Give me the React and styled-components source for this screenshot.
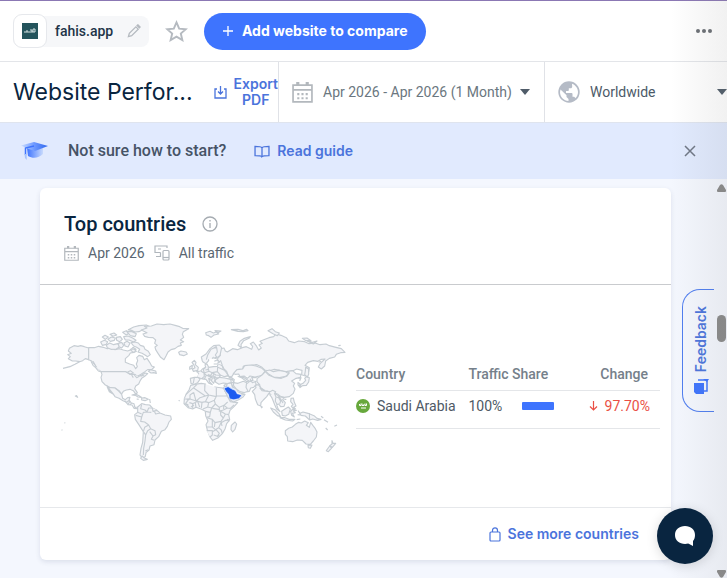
import styled, { createGlobalStyle } from "styled-components";

const GlobalStyle = createGlobalStyle`
  * {
    box-sizing: border-box;
  }
  body {
    margin: 0;
    background: #f4f7fe;
    color: #3a5166;
    font-family: Roboto, sans-serif;
    font-size: 14px;
    line-height: 16px;
  }
  button {
    border: 0;
    padding: 0;
    background: none;
    color: inherit;
    font: inherit;
    cursor: pointer;
  }
  svg {
    display: block;
    flex-shrink: 0;
  }
`;

const Page = styled.div`
  position: relative;
  min-height: 100vh;
  display: flex;
  flex-direction: column;
  overflow: hidden;
`;
const EdgeShade = styled.div`
  position: absolute;
  top: 0;
  right: 0;
  bottom: 0;
  width: 56px;
  background: linear-gradient(to right, rgba(120, 120, 120, 0), rgba(120, 120, 120, 0.1));
  pointer-events: none;
`;

const TopBar = styled.header`
  display: flex;
  align-items: center;
  height: 62px;
  padding: 0 14px 0 13px;
  background: #fff;
  border-top: 1px solid #8b78b4;
  border-bottom: 1px solid #e3e5e9;
`;
const SiteChip = styled.div`
  display: flex;
  align-items: center;
  height: 31px;
  padding-right: 8px;
  border-radius: 8px;
  background: #f6f7f9;
`;
const SiteLogo = styled.div`
  display: grid;
  place-items: center;
  width: 34px;
  height: 34px;
  border: 1px solid #e6e8ec;
  border-radius: 9px;
  background: #fff;
`;
const LogoTile = styled.div`
  display: grid;
  place-items: center;
  width: 16px;
  height: 16px;
  background: #24545c;
`;
const SiteName = styled.span`
  margin: 0 14px 0 8px;
  color: #1e3448;
  font-weight: 500;
`;
const IconButton = styled.button`
  display: grid;
  place-items: center;
  color: ${(props) => props.$color || "#b5bac0"};
`;
const StarButton = styled(IconButton)`
  margin: 0 16px;
`;
const CompareButton = styled.button`
  display: flex;
  align-items: center;
  justify-content: center;
  gap: 9px;
  width: 222px;
  height: 37px;
  border-radius: 19px;
  background: #3e74fe;
  color: #fff;
  font-family: Inter, sans-serif;
  font-size: 14px;
  font-weight: 700;
`;
const MoreButton = styled(IconButton)`
  margin-left: auto;
`;

const FilterBar = styled.div`
  display: flex;
  height: 61px;
  background: #fff;
  border-bottom: 1px solid #dfe4ee;
`;
const TitleArea = styled.div`
  display: flex;
  align-items: center;
  justify-content: space-between;
  width: 278px;
  padding-left: 13px;
`;
const Title = styled.h1`
  margin: 0;
  color: #092540;
  font-family: Inter, sans-serif;
  font-size: 23px;
  font-weight: 400;
  line-height: 32px;
  white-space: nowrap;
`;
const ExportButton = styled.button`
  display: flex;
  align-items: center;
  gap: 7px;
  color: #4b74dc;
  font-family: Inter, sans-serif;
  font-size: 14px;
  font-weight: 600;
  text-align: center;
`;
const Filter = styled.button`
  display: flex;
  align-items: center;
  flex: ${(props) => (props.$grow ? "1" : "0 0 266px")};
  padding-left: 13px;
  border-left: 1px solid #e0e2e7;
  color: ${(props) => (props.$grow ? "#4c5a68" : "#6b7780")};
  white-space: nowrap;
  overflow: hidden;
`;
const FilterLabel = styled.span`
  margin: 0 8px 0 10px;
  ${(props) => props.$fill && "flex: 1; text-align: left;"}
`;

const Banner = styled.section`
  display: flex;
  align-items: center;
  height: 56px;
  padding: 0 31px 0 21px;
  background: #e1eafe;
`;
const BannerText = styled.span`
  margin: 0 28px 0 20px;
  color: #465366;
  font-size: 16px;
  font-weight: 500;
`;
const TextLink = styled.a`
  display: flex;
  align-items: center;
  gap: 7px;
  color: #4b74dc;
  font-family: Inter, sans-serif;
  font-size: 14px;
  font-weight: 600;
  text-decoration: none;
`;
const CloseButton = styled(IconButton)`
  margin-left: auto;
`;

const Content = styled.div`
  display: flex;
  flex: 1;
`;
const Main = styled.main`
  flex: 1;
  min-width: 0;
  padding: 9px 44px 18px 40px;
`;
const ScrollTrack = styled.div`
  display: flex;
  flex-direction: column;
  align-items: center;
  width: 12px;
  padding: 5px 0 0;
`;
const ScrollThumb = styled.div`
  width: 9px;
  height: 27px;
  margin: 123px 0 auto;
  border-radius: 5px;
  background: #8a8a8a;
`;

const Card = styled.section`
  border-radius: 6px;
  background: #fff;
  box-shadow: 0 2px 5px rgba(40, 60, 100, 0.12);
`;
const CardHeader = styled.header`
  padding: 24px 24px 23px;
  border-bottom: 1px solid #c9cbce;
`;
const CardTitle = styled.h2`
  display: flex;
  align-items: center;
  gap: 16px;
  margin: 0 0 9px;
  color: #092540;
  font-size: 20px;
  font-weight: 500;
  line-height: 24px;
`;
const CardMeta = styled.div`
  display: flex;
  align-items: center;
  gap: 9px;
  color: #5a6772;
`;
const CardBody = styled.div`
  display: flex;
  align-items: flex-start;
  padding: 30px 11px 37px 15px;
`;
const TableBox = styled.div`
  flex: 1;
  padding: 44px 0 1px 1px;
`;
const Table = styled.table`
  width: 100%;
  table-layout: fixed;
  border-collapse: collapse;
  tr {
    border-bottom: 1px solid #e4e6e9;
  }
`;
const Th = styled.th`
  width: ${(props) => props.$width};
  height: 31px;
  padding: 0 12px 0 0;
  color: #75808a;
  font-weight: 500;
  text-align: ${(props) => props.$align || "left"};
`;
const Td = styled.td`
  height: 38px;
  padding: 0 10px 6px 0;
  color: ${(props) => props.$color || "#4e5965"};
  white-space: nowrap;
`;
const Cell = styled.div`
  display: flex;
  align-items: center;
  justify-content: ${(props) => props.$justify || "flex-start"};
  gap: ${(props) => props.$gap || "7px"};
`;
const ShareBar = styled.span`
  width: 32px;
  height: 8px;
  border-radius: 1px;
  background: #3e74fe;
`;
const CardFooter = styled.footer`
  display: flex;
  align-items: center;
  justify-content: flex-end;
  height: 53px;
  padding-right: 32px;
  border-top: 1px solid #e6e8eb;
`;

const FeedbackTab = styled.button`
  position: absolute;
  top: 289px;
  right: 13px;
  display: flex;
  flex-direction: column-reverse;
  align-items: center;
  justify-content: center;
  gap: 5px;
  width: 32px;
  height: 123px;
  padding-left: 5px;
  border: 1px solid #4f7ef0;
  border-right: 0;
  border-radius: 18px 0 0 18px;
  background: #f4f7fe;
  color: #4b74dc;
  font-family: Inter, sans-serif;
  font-size: 14px;
  font-weight: 600;
`;
const FeedbackText = styled.span`
  writing-mode: vertical-rl;
  transform: rotate(180deg);
`;
const ChatButton = styled.button`
  position: absolute;
  right: 14px;
  bottom: 14px;
  display: grid;
  place-items: center;
  width: 56px;
  height: 56px;
  border-radius: 50%;
  background: #092540;
  box-shadow: 0 2px 12px rgba(0, 0, 0, 0.15);
`;

const CalendarIcon = ({ size, color }) => (
  <svg width={size} height={size} viewBox="0 0 20 20" fill="none" stroke={color} strokeWidth="1.6">
    <path d="M1 3H19V19H1ZM1 7.500H19" />
    <path d="M5.500 0V3M14.500 0V3" strokeWidth="3" />
    <path d="M5 11.500H15M5 15.500H15" strokeWidth="2" strokeDasharray="2 2" />
  </svg>
);

const PencilIcon = () => (
  <svg width="14" height="14" viewBox="0 0 15 15" fill="none" stroke="currentColor" strokeWidth="1.4">
    <path d="M1.5 13.5L2.5 10L9.500 3L12 5.500L5 12.5ZM10.8 1.7L11.7 .9L14 3.3L13.2 4.1Z" />
  </svg>
);

const StarIcon = () => (
  <svg width="23" height="22" viewBox="0 0 24 23" fill="none" stroke="currentColor" strokeWidth="2">
    <path d="M12 2.5L14.8 9L21.8 9.6L16.5 14.2L18.1 21L12 17.4L5.9 21L7.5 14.2L2.2 9.6L9.2 9Z" />
  </svg>
);

const CaretIcon = () => (
  <svg width="10" height="6" viewBox="0 0 10 6" fill="#4f5c69">
    <path d="M0 0H10L5 6Z" />
  </svg>
);

const DownloadIcon = () => (
  <svg width="13" height="14" viewBox="0 0 13 14" fill="none" stroke="currentColor" strokeWidth="1.3">
    <path d="M3 4H1V13H12V4H10M6.500 1V9M4 6.500L6.500 9L9 6.500" />
  </svg>
);

const GlobeIcon = () => (
  <svg width="22" height="22" viewBox="0 0 22 22">
    <circle cx="11" cy="11" r="10.700" fill="#b5bbc6" />
    <path
      d="M2.500 8.500L8.500 14.200V16L10.500 18V20C5.700 19.700 2 15.800 2 11ZM14 2.700C17.500 4 20 7.200 20 11C20 13.500 19 15.700 17.400 17.300C17 16.300 16.300 15.800 15.500 15.800H14.500V13C14.500 12.300 14.200 12 13.600 12H8V10H9.800C10.400 10 10.800 9.700 10.800 9V7.300H12.600C13.500 7.300 14.200 6.500 14.200 5.500Z"
      fill="#fff"
    />
  </svg>
);

const CapIcon = () => (
  <svg width="27" height="20" viewBox="0 0 27 20">
    <defs>
      <linearGradient id="capTop" x1="0" y1="0" x2="1" y2="0">
        <stop offset="0" stopColor="#c9dcff" />
        <stop offset="0.500" stopColor="#6c98ff" />
        <stop offset="1" stopColor="#2f67ee" />
      </linearGradient>
      <linearGradient id="capBase" x1="0" y1="0" x2="1" y2="0">
        <stop offset="0" stopColor="#3e74fe" />
        <stop offset="1" stopColor="#c8dafd" />
      </linearGradient>
    </defs>
    <path d="M6 7L22 6.500V13C18 17 12 18 7 15Z" fill="url(#capBase)" />
    <path d="M0 4.500L13 1L27 5L14 10L7 7.800Z" fill="url(#capTop)" />
    <path d="M13 5L4.500 7V14" fill="none" stroke="#3e74fe" strokeWidth="1.500" />
    <path d="M3.500 13H5.600L5.800 19L4 17Z" fill="#a7c3fa" />
  </svg>
);

const BookIcon = () => (
  <svg width="16" height="13" viewBox="0 0 17 14" fill="none" stroke="currentColor" strokeWidth="1.400">
    <path d="M8.500 12.500C7.500 11.500 6.500 11.500 1 11.500V1.500C6 1.500 7.500 1.500 8.500 3C9.500 1.500 11 1.500 16 1.500V11.500C10.500 11.500 9.500 11.500 8.500 12.500V3" />
  </svg>
);

const CloseIcon = () => (
  <svg width="12" height="12" viewBox="0 0 12 12" stroke="currentColor" strokeWidth="1.500">
    <path d="M1 1L11 11M11 1L1 11" />
  </svg>
);

const InfoIcon = () => (
  <svg width="16" height="16" viewBox="0 0 16 16" fill="none" stroke="#a5abb1" strokeWidth="1.300">
    <circle cx="8" cy="8" r="7" />
    <path d="M8 7V12M8 4V5.500" />
  </svg>
);

const DevicesIcon = () => (
  <svg width="16" height="16" viewBox="0 0 16 16" fill="none" stroke="#b0b6bc" strokeWidth="1.200">
    <path d="M13 3V1H1V7.500H6.500M7 4H4M2 11.500H6.500V7.500" />
    <rect x="9" y="5.500" width="6" height="9.500" rx="1" />
    <path d="M9 12.500H15" />
  </svg>
);

const FlagIcon = () => (
  <svg width="14" height="14" viewBox="0 0 14 14">
    <circle cx="7" cy="7" r="7" fill="#67a83c" />
    <path d="M3.500 5V6.500H5V4.500M6 4.500V6.500H8V5M9 4.500V6.500H10.500V4.500M5 9H10" fill="none" stroke="#fff" />
  </svg>
);

const ArrowDownIcon = () => (
  <svg width="9" height="10" viewBox="0 0 9 10" fill="none" stroke="currentColor" strokeWidth="1.200">
    <path d="M4.500 0V9M1 5.500L4.500 9L8 5.500" />
  </svg>
);

const LockIcon = () => (
  <svg width="12" height="15" viewBox="0 0 12 15" fill="none" stroke="currentColor" strokeWidth="1.200">
    <rect x="1" y="5" width="10" height="9" rx="1" />
    <path d="M3.500 5V3.500C3.500 0 8.500 0 8.500 3.500V5" />
  </svg>
);

const FeedbackIcon = () => (
  <svg width="16" height="17" viewBox="0 0 16 17">
    <path d="M1 5H11V16H3L1 14Z" fill="#3e74fe" />
    <path d="M5 2H14V13H11" fill="none" stroke="#3e74fe" strokeWidth="1.500" />
    <path d="M10 1H16L14 4Z" fill="#3e74fe" />
  </svg>
);

const ChatIcon = () => (
  <svg width="20" height="20" viewBox="0 0 20 20" fill="#fff">
    <path d="M10 0C15.800 0 20 3.500 20 9C20 12 19 13.700 18 15V20L13.200 17.600C6 19 0 15.500 0 9C0 3.500 4.200 0 10 0Z" />
  </svg>
);

const ScrollArrow = ({ down }) => (
  <svg width="9" height="8" viewBox="0 0 9 8" fill="#8a8a8a">
    <path d={down ? "M0 1Q0 0 1 0H8Q9 0 9 1V2L6 7Q4.500 8.500 3 7L0 2Z" : "M3 1Q4.500 -.5 6 1L9 6V7Q9 8 8 8H1Q0 8 0 7V6Z"} />
  </svg>
);

const americas = [
  // Alaska, Canada
  "M24 160L45 155L60 148L74 140L62 138L52 138L40 131L46 125L38 119L49 115L40 108L43 100L57 92L69 94L77 92L88 95L101 99V134L91 131L83 137L74 140",
  "M101 98L118 98L131 94L145 97L157 101L168 99L180 104L193 101L205 105L218 108L228 104L234 97L243 103L237 112L226 114L222 121L211 131L211 142L224 147L236 151L242 161L247 155L244 147L248 137L245 128L252 121L263 124L268 134L276 130L284 142L290 153L298 156L290 164L278 164L270 170L258 178L248 184L241 181L232 177L225 178L212 170H138L127 162L120 151L110 138L101 134Z",
  "M108 139L114 151L122 158L130 168L137 170M114 139L124 156M286 164L302 168L304 175L296 173L288 174L280 169Z",
  // Arctic islands
  "M137 81L148 76L158 80L154 88L142 91Z",
  "M154 91L164 84L176 89L188 86L194 95L184 102L168 103L157 98Z",
  "M142 66L150 61L160 66L151 73ZM159 73L169 66L181 69L178 76L166 79ZM165 58L177 54L185 60L174 64Z",
  "M184 67L196 65L202 73L194 80L185 76ZM190 85L200 82L206 91L200 99L192 95ZM203 52L214 47L223 54L214 60Z",
  "M207 84L216 79L225 85L219 96L210 93ZM206 65L219 63L233 69L243 76L236 81L222 75L211 75Z",
  "M220 44L236 36L252 32L274 30L289 37L278 42L263 44L252 50L240 51L232 47ZM215 49L231 50L244 56L240 65L226 62Z",
  "M228 83L240 81L250 84L256 91L266 94L270 103L280 109L286 119L278 125L270 120L261 115L249 111L254 103L245 97L236 93ZM226 103L237 102L244 109L234 112Z",
  // Greenland, Iceland
  "M259 45L276 39L268 34L289 33L306 27L326 29L345 27L363 32L374 35L383 40L401 41L385 50L382 58L386 67L376 75L386 80L376 84L379 91L369 94L360 101L348 104L339 111L333 123L327 134L317 127L309 115L302 104L300 96L307 91L299 85L302 75L294 68L280 67L269 64L264 57L276 53Z",
  "M371 112L378 108L393 111L397 117L386 122L374 119Z",
  // United States, Mexico
  "M138 170H212L225 178L240 178L248 184L259 181L270 174L278 176L269 184L260 190L255 198L251 207L242 213L239 221L247 233L243 238L235 227L225 223L214 225L205 229L200 237L192 227L180 219L164 217L151 210L141 200L138 187L141 179Z",
  "M218 171L226 167L235 174L224 177ZM230 180L235 188M238 180L245 188L253 184M257 184L268 180",
  "M156 213L161 217L180 219L191 228L200 238L203 250L211 254L218 248L225 247L222 256L215 262L204 257L192 250L180 245L174 236L166 226ZM157 217L164 227L174 237L163 230Z",
  // Central America, Caribbean
  "M215 262L223 256L228 263L237 266L239 276L246 280L253 275M209 257L219 269L231 270L237 280L248 281M225 258L220 267M230 264L225 270",
  "M231 240L242 237L252 242L259 247L249 246L241 241ZM260 249L270 248L280 253L270 257L260 255ZM245 252L251 253M284 252L286 264",
  // South America
  "M248 276L260 266L271 269L284 270L292 279L306 286L315 294L330 300L347 303L349 313L342 321L337 334L330 344L319 349L311 365L300 375L297 389L285 393L282 405L273 413L271 424L263 431L255 420L258 400L263 382L265 350L253 331L241 313L239 299L248 292Z",
  "M260 268L257 281L270 285L276 291L281 279L292 279M276 291L265 292L260 306L242 301M260 306L257 319L269 321L281 330L287 341L278 347L272 360L267 352M281 330L269 337L265 350M287 341L300 347L302 359L294 363L284 350M294 363L289 373L298 376M272 360L270 378L266 400L265 420M292 279L294 289L306 286M298 289L302 297L315 294M276 291L289 292M248 292L260 297M261 423L268 429L277 433L265 436L257 430ZM271 408L279 404",
  "M61 243L65 242L68 247ZM28 323L31 324M20 344L22 346M371 256L374 258",
];

const eurasia = [
  // Russia and the far north
  "M119 102L132 99L136 108L142 111L158 101L172 104L187 98L199 95L215 103L218 94L211 86L220 81L228 91L236 105L244 99L237 90L247 85L240 79L255 73L267 68L281 65L288 57L303 61L319 68L326 78L343 83L356 78L374 80L387 86L405 84L420 89L438 87L448 92L468 97L484 101L495 112L482 113L469 118L464 126L448 130L437 138L434 153L424 162L415 156L421 145L435 132L424 133L414 139L400 137L383 142L375 151L388 158L386 170L376 183L365 179L366 166L350 162L339 167L327 170L310 169L296 165L283 163L266 168L254 165L246 157L231 149L216 150L204 155L190 153L188 162L172 164L161 176L154 187L145 183L140 169L132 162L128 154L120 147L112 132L121 121Z",
  "M174 91L180 79L193 70L211 65L207 70L191 77L183 89L184 98ZM264 47L276 41L286 50L298 54L292 62L279 56ZM367 70L381 69L393 77L378 77ZM381 78L397 82L411 78L400 87ZM77 53L90 49L100 54L109 51L116 57L102 60L93 67L86 62L79 60ZM105 47L123 48L114 53ZM154 44L174 43L188 47L200 43L204 47L190 50L174 49ZM475 92L482 91",
  // Scandinavia, Britain
  "M67 138L64 126L78 117L90 101L101 92L118 90L125 98L120 121L108 130L98 128L94 118L98 109L89 112L85 125L86 137L78 146L70 142Z",
  "M79 134L83 120L93 103L102 99L110 98L112 111L106 120L111 128L103 128M101 99L110 94M96 131L101 126",
  "M37 163L45 158L41 149L36 142L43 136L48 142L46 149L55 157L53 166L40 169ZM29 156L37 151L36 160L29 163Z",
  // Europe
  "M31 190L33 205L43 208L53 203L60 193L53 185L58 177L50 170L62 168L67 162L77 157L75 149L81 147L86 157L100 155L112 154L115 145L127 153L130 164L137 170L145 182L134 185L122 181L116 189L105 194L101 205L94 197L86 190L89 201L97 209L87 205L78 193L67 191L55 187L43 187Z",
  "M51 186L65 191L73 184L72 174L62 168M65 191L73 192L79 181L72 174M73 174L70 164L77 157M72 174L87 169L84 157M87 169L97 173L112 170L113 156M112 145L122 137L127 151M103 139L111 135L120 142M101 147L112 147M112 156L130 164M112 170L122 181M97 173L92 181L79 181M92 181L97 189L105 188L116 189M97 173L108 180L122 181M103 175L98 184M97 189L94 198M87 177L84 183L94 187L87 192M43 188L40 204M76 165L86 163M89 183L107 184M101 183L104 193",
  // Anatolia, Middle East
  "M106 194L119 187L134 189L152 193L154 203L142 206L130 204L117 208L107 202ZM140 182L154 187L158 195L152 193M146 188L158 189M154 187L163 194L160 203L154 203",
  "M136 207L154 204L157 216L168 221L175 231L187 236L195 238L188 247L176 254L160 261L152 256L144 246L137 232L131 218ZM131 210L138 217M154 204L160 219M142 205L139 216",
  "M160 203L174 205L190 199L200 203L198 217L204 229L192 233L180 230L169 222L161 213ZM198 208L209 199L223 198L229 208L221 217L212 219L208 229L198 231M158 195L164 204M174 252L183 240L195 239",
  // Central Asia
  "M160 176L171 164L188 162L194 152L212 150L228 153L246 160L255 168L247 180L238 183L225 186L210 183L202 190L192 183L180 185L176 177L166 178ZM173 184L186 189L200 200L210 198M178 184L190 187L207 198L219 196L215 187L226 188L235 184M210 191L217 203L230 198",
  "M256 168L269 165L280 170L297 166L317 170L326 176L317 184L299 188L280 186L267 178Z",
  "M231 191L246 180L256 170L267 181L285 188L304 190L320 184L328 174L322 169L338 167L348 176L363 178L361 187L346 191L335 198L344 205L340 213L345 222L340 235L328 245L313 247L303 245L294 238L284 234L274 231L264 229L251 225L241 219L239 209L231 201Z",
  // India, south-east Asia
  "M217 229L228 218L226 211L235 209L244 220L256 228L270 230L278 226L287 230L282 239L273 238L266 236L260 245L250 255L243 263L242 273L233 269L226 252L224 239ZM239 218L246 227L268 230M268 232L271 242M242 274L247 276L243 279",
  "M283 234L292 240L301 246L313 248L308 254L316 263L312 274L302 275L296 267L290 269L294 281L300 290L290 282L284 269L280 259L275 247L270 240M283 234L288 246L296 248L302 259L299 266M295 243L302 252L309 264M287 248L286 259L291 268",
  "M272 279L285 284L296 295L302 305L292 302L280 291ZM300 308L315 308L327 313L345 313L338 318L316 315ZM305 289L315 282L325 276L331 282L326 298L316 303L307 301ZM332 290L337 283L349 286L340 288L346 293L337 295L343 306L335 301ZM313 253L319 253",
  "M333 250L340 249L343 262L348 273L341 277L344 285L334 274L339 268L332 260ZM341 277L347 282M355 288L360 295L369 291L384 295L402 302L411 310L423 313L413 316L398 312L389 315L376 303L363 301ZM388 294L389 315M350 314L361 312M353 299L360 300",
  // Japan, Korea
  "M377 156L386 162L386 178L382 187L374 179L376 168ZM374 190L380 184L388 188L386 201L379 211L368 212L360 218L358 210L369 205L377 196ZM354 202L363 209L360 217L354 210ZM355 190L363 188L359 198M416 142L424 139",
  // Australia, New Zealand
  "M316 347L326 340L337 336L346 328L356 322L364 324L374 318L385 323L379 331L388 337L392 322L399 332L406 341L411 351L409 366L400 378L391 388L378 387L367 376L352 375L338 380L323 378L322 365L316 358ZM384 391L396 390L391 400L385 398Z",
  "M456 377L459 385L467 385L457 397L449 392L456 387ZM449 393L455 399L445 410L439 407ZM423 304L430 309M432 314L444 322M437 339L443 345M463 334L471 330",
];

const africa = [
  "M32 211L44 208L64 205L77 207L75 216L91 221L105 216L128 219L134 224L142 243L151 260L173 263L162 275L150 286L146 299L149 314L140 326L135 342L127 356L115 368L98 376L90 366L82 345L78 329L84 318L77 302L76 289L65 283L48 277L38 282L24 278L12 266L13 251L18 238L27 225Z",
  "M12 252H30V240L41 232M18 238L41 218L51 208M75 207L74 227L86 240L109 245V218M41 219L76 243L86 240M109 243H142M30 252L49 258L60 248L76 243M41 232L48 258M26 253L17 265L27 276M28 263L38 266L38 281M38 266L53 259L59 276M53 259L66 262L76 260L86 241M66 262L64 279M76 260L86 263L83 276L69 282M86 263L103 256L109 244M83 276L95 279L106 267L103 256M106 267L118 277L132 271L143 261M132 271L142 279L151 280L162 270M118 277L118 289L130 285L142 279",
  "M76 289L91 292L95 279M91 292L89 305L79 307M83 309L97 313L105 323L123 319L130 309L122 300L122 289M97 280L116 283L122 289L136 297L146 299M97 313V336H80M97 336L106 344L116 338L124 345L127 356M105 323L103 336M116 338L123 323L137 316L149 314M123 319L126 333M80 347L97 347L97 360L90 366M97 350L108 344L118 355L112 364L101 360M111 366L118 361M130 309L136 298M20 254L31 252M12 267L25 269M46 264L48 277M33 276L42 270M154 331L165 321L170 327L165 343L158 351L153 344ZM134 228L140 234M131 271L131 282M142 312L147 321",
];

// West of the Atlantic uses the viewBox directly, everything east is shifted as a group
const WorldMap = () => (
  <svg
    width="300"
    height="155"
    viewBox="0 0 900 465"
    fill="#f4f5f8"
    stroke="#c6cdd3"
    strokeWidth="3.4"
    strokeLinejoin="round"
    role="img"
    aria-label="World map"
  >
    {americas.map((d) => (
      <path key={d} d={d} />
    ))}
    <g transform="translate(375 0)">
      {[...africa, ...eurasia].map((d) => (
        <path key={d} d={d} />
      ))}
      <path d="M134 220L144 216L156 223L165 228L171 239L183 243L177 248L161 253L150 250L147 238L139 229Z" fill="#1d5cf0" stroke="#c4d5fb" strokeWidth="5" />
      <path d="M136 221L144 218L155 225L164 229L170 239L181 242L176 248L161 251L151 249L148 237L141 229Z" fill="#1d5cf0" stroke="#1d5cf0" />
    </g>
  </svg>
);

const App = () => {
  return (
    <Page>
      <GlobalStyle />
      <TopBar>
        <SiteChip>
          <SiteLogo>
            <LogoTile>
              <svg width="14" height="6" viewBox="0 0 14 6" fill="none" stroke="#d5e2e2">
                <path d="M1 4H4V2M4 4H6M7 2H9V4H6M10 4V1H12V4H9" />
              </svg>
            </LogoTile>
          </SiteLogo>
          <SiteName>fahis.app</SiteName>
          <IconButton aria-label="Edit website">
            <PencilIcon />
          </IconButton>
        </SiteChip>
        <StarButton aria-label="Add to favorites">
          <StarIcon />
        </StarButton>
        <CompareButton>
          <svg width="10" height="10" viewBox="0 0 10 10" stroke="currentColor" strokeWidth="1.300">
            <path d="M5 0V10M0 5H10" />
          </svg>
          Add website to compare
        </CompareButton>
        <MoreButton aria-label="More" $color="#6b6f75">
          <svg width="18" height="4" viewBox="0 0 18 4" fill="currentColor">
            <circle cx="3" cy="2" r="2" />
            <circle cx="9" cy="2" r="2" />
            <circle cx="15" cy="2" r="2" />
          </svg>
        </MoreButton>
      </TopBar>
      <FilterBar>
        <TitleArea>
          <Title>Website Perfor...</Title>
          <ExportButton>
            <DownloadIcon />
            <span>
              Export
              <br />
              PDF
            </span>
          </ExportButton>
        </TitleArea>
        <Filter>
          <CalendarIcon size={21} color="#b3b8bd" />
          <FilterLabel>Apr 2026 - Apr 2026 (1 Month)</FilterLabel>
          <CaretIcon />
        </Filter>
        <Filter $grow>
          <GlobeIcon />
          <FilterLabel $fill>Worldwide</FilterLabel>
          <CaretIcon />
        </Filter>
      </FilterBar>
      <Banner>
        <CapIcon />
        <BannerText>Not sure how to start?</BannerText>
        <TextLink href="#">
          <BookIcon />
          Read guide
        </TextLink>
        <CloseButton aria-label="Close" $color="#6f7785">
          <CloseIcon />
        </CloseButton>
      </Banner>
      <Content>
        <Main>
          <Card>
            <CardHeader>
              <CardTitle>
                Top countries
                <InfoIcon />
              </CardTitle>
              <CardMeta>
                <CalendarIcon size={15} color="#b3b8bd" />
                <span>Apr 2026</span>
                <DevicesIcon />
                <span>All traffic</span>
              </CardMeta>
            </CardHeader>
            <CardBody>
              <WorldMap />
              <TableBox>
                <Table>
                  <thead>
                    <tr>
                      <Th $width="37%">Country</Th>
                      <Th $width="35%">Traffic Share</Th>
                      <Th $align="right">Change</Th>
                    </tr>
                  </thead>
                  <tbody>
                    <tr>
                      <Td>
                        <Cell>
                          <FlagIcon />
                          Saudi Arabia
                        </Cell>
                      </Td>
                      <Td>
                        <Cell $gap="20px">
                          100%
                          <ShareBar />
                        </Cell>
                      </Td>
                      <Td $color="#ea4f45">
                        <Cell $justify="flex-end">
                          <ArrowDownIcon />
                          97.70%
                        </Cell>
                      </Td>
                    </tr>
                  </tbody>
                </Table>
              </TableBox>
            </CardBody>
            <CardFooter>
              <TextLink href="#">
                <LockIcon />
                See more countries
              </TextLink>
            </CardFooter>
          </Card>
        </Main>
        <ScrollTrack>
          <ScrollArrow />
          <ScrollThumb />
          <ScrollArrow down />
        </ScrollTrack>
      </Content>
      <FeedbackTab>
        <FeedbackIcon />
        <FeedbackText>Feedback</FeedbackText>
      </FeedbackTab>
      <EdgeShade />
      <ChatButton aria-label="Open chat">
        <ChatIcon />
      </ChatButton>
    </Page>
  );
};

export default App;
